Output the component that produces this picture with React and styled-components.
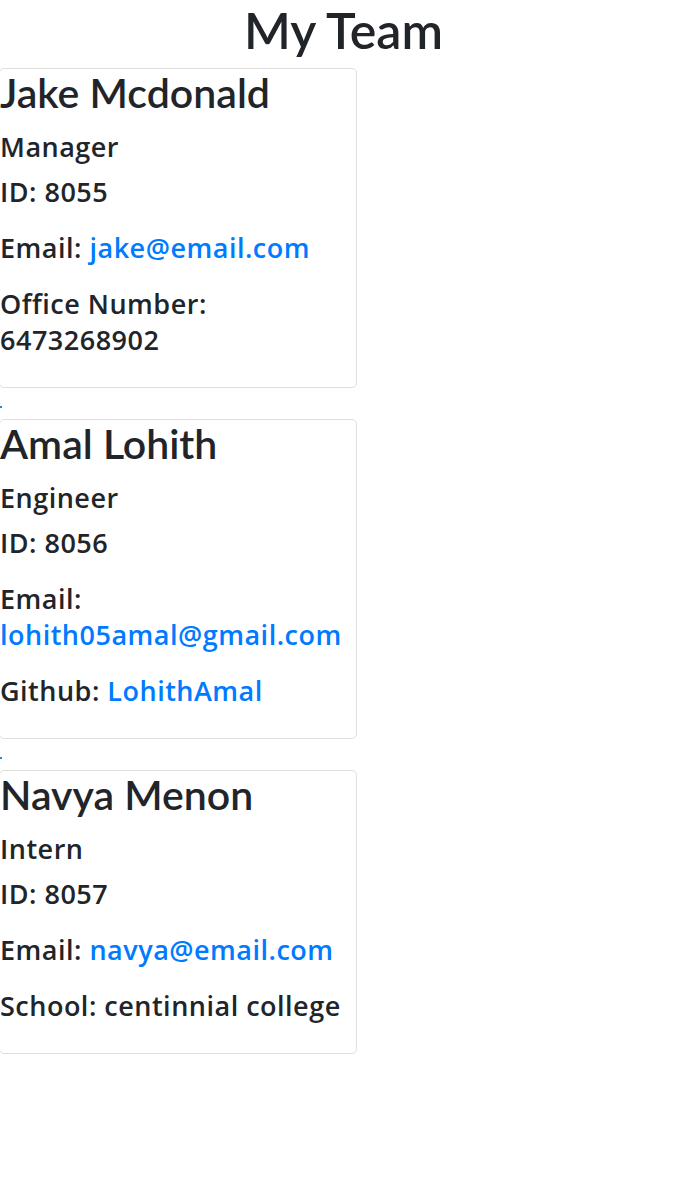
import styled, { createGlobalStyle } from "styled-components";

const GlobalStyle = createGlobalStyle`
  body {
    margin: 0;
    background: #fff;
    color: #212529;
    font-family: "Open Sans", "Noto Sans", sans-serif;
  }
`;

const team = [
  {
    name: "Jake Mcdonald",
    role: "Manager",
    id: 8055,
    email: "jake@email.com",
    extra: { label: "Office Number:", value: "6473268902", wrap: true },
  },
  {
    name: "Amal Lohith",
    role: "Engineer",
    id: 8056,
    email: "lohith05amal@gmail.com",
    wrapEmail: true,
    extra: { label: "Github:", value: "LohithAmal", link: true },
  },
  {
    name: "Navya Menon",
    role: "Intern",
    id: 8057,
    email: "navya@email.com",
    extra: { label: "School:", value: "centinnial college" },
  },
];

const Page = styled.main`
  overflow: hidden;
`;

const Title = styled.h1`
  margin: 0 0 8px;
  font-family: Lato, sans-serif;
  font-size: 50px;
  font-weight: 600;
  line-height: 60px;
  text-align: center;
`;

const List = styled.div`
  display: flex;
  flex-direction: column;
`;

const Card = styled.section`
  width: 358px;
  margin-left: -1px;
  padding: 0 0 9px;
  border: 1px solid rgba(0, 0, 0, 0.125);
  border-radius: 5px;
  box-sizing: border-box;
`;

const Name = styled.h2`
  margin: 0 0 12px;
  font-family: Lato, sans-serif;
  font-size: 41px;
  font-weight: 600;
  line-height: 48px;
`;

const Line = styled.p`
  margin: 0 0 ${(p) => p.$gap}px;
  font-size: 27px;
  font-weight: 600;
  letter-spacing: 0.5px;
  line-height: 36px;
`;

const Link = styled.a`
  color: #007bff;
  text-decoration: none;
`;

const Break = styled.br``;

const Gap = styled.div`
  height: 31px;
  display: flex;
  align-items: flex-start;
`;

const Dot = styled.span`
  width: 2px;
  height: 2px;
  margin-top: 18px;
  background: #3b7fc4;
`;

const MemberCard = ({ m }) => (
  <Card>
    <Name>{m.name}</Name>
    <Line $gap={9}>{m.role}</Line>
    <Line $gap={20}>ID: {m.id}</Line>
    <Line $gap={20}>
      Email:{m.wrapEmail ? <Break /> : " "}
      <Link href={`mailto:${m.email}`}>{m.email}</Link>
    </Line>
    <Line $gap={20}>
      {m.extra.label}
      {m.extra.wrap ? <Break /> : " "}
      {m.extra.link ? (
        <Link href={`https://github.com/${m.extra.value}`}>{m.extra.value}</Link>
      ) : (
        m.extra.value
      )}
    </Line>
  </Card>
);

export default function App() {
  return (
    <Page>
      <GlobalStyle />
      <Title>My Team</Title>
      <List>
        {team.map((m, i) => (
          <div key={m.id}>
            <MemberCard m={m} />
            {i < team.length - 1 && (
              <Gap>
                <Dot />
              </Gap>
            )}
          </div>
        ))}
      </List>
    </Page>
  );
}
